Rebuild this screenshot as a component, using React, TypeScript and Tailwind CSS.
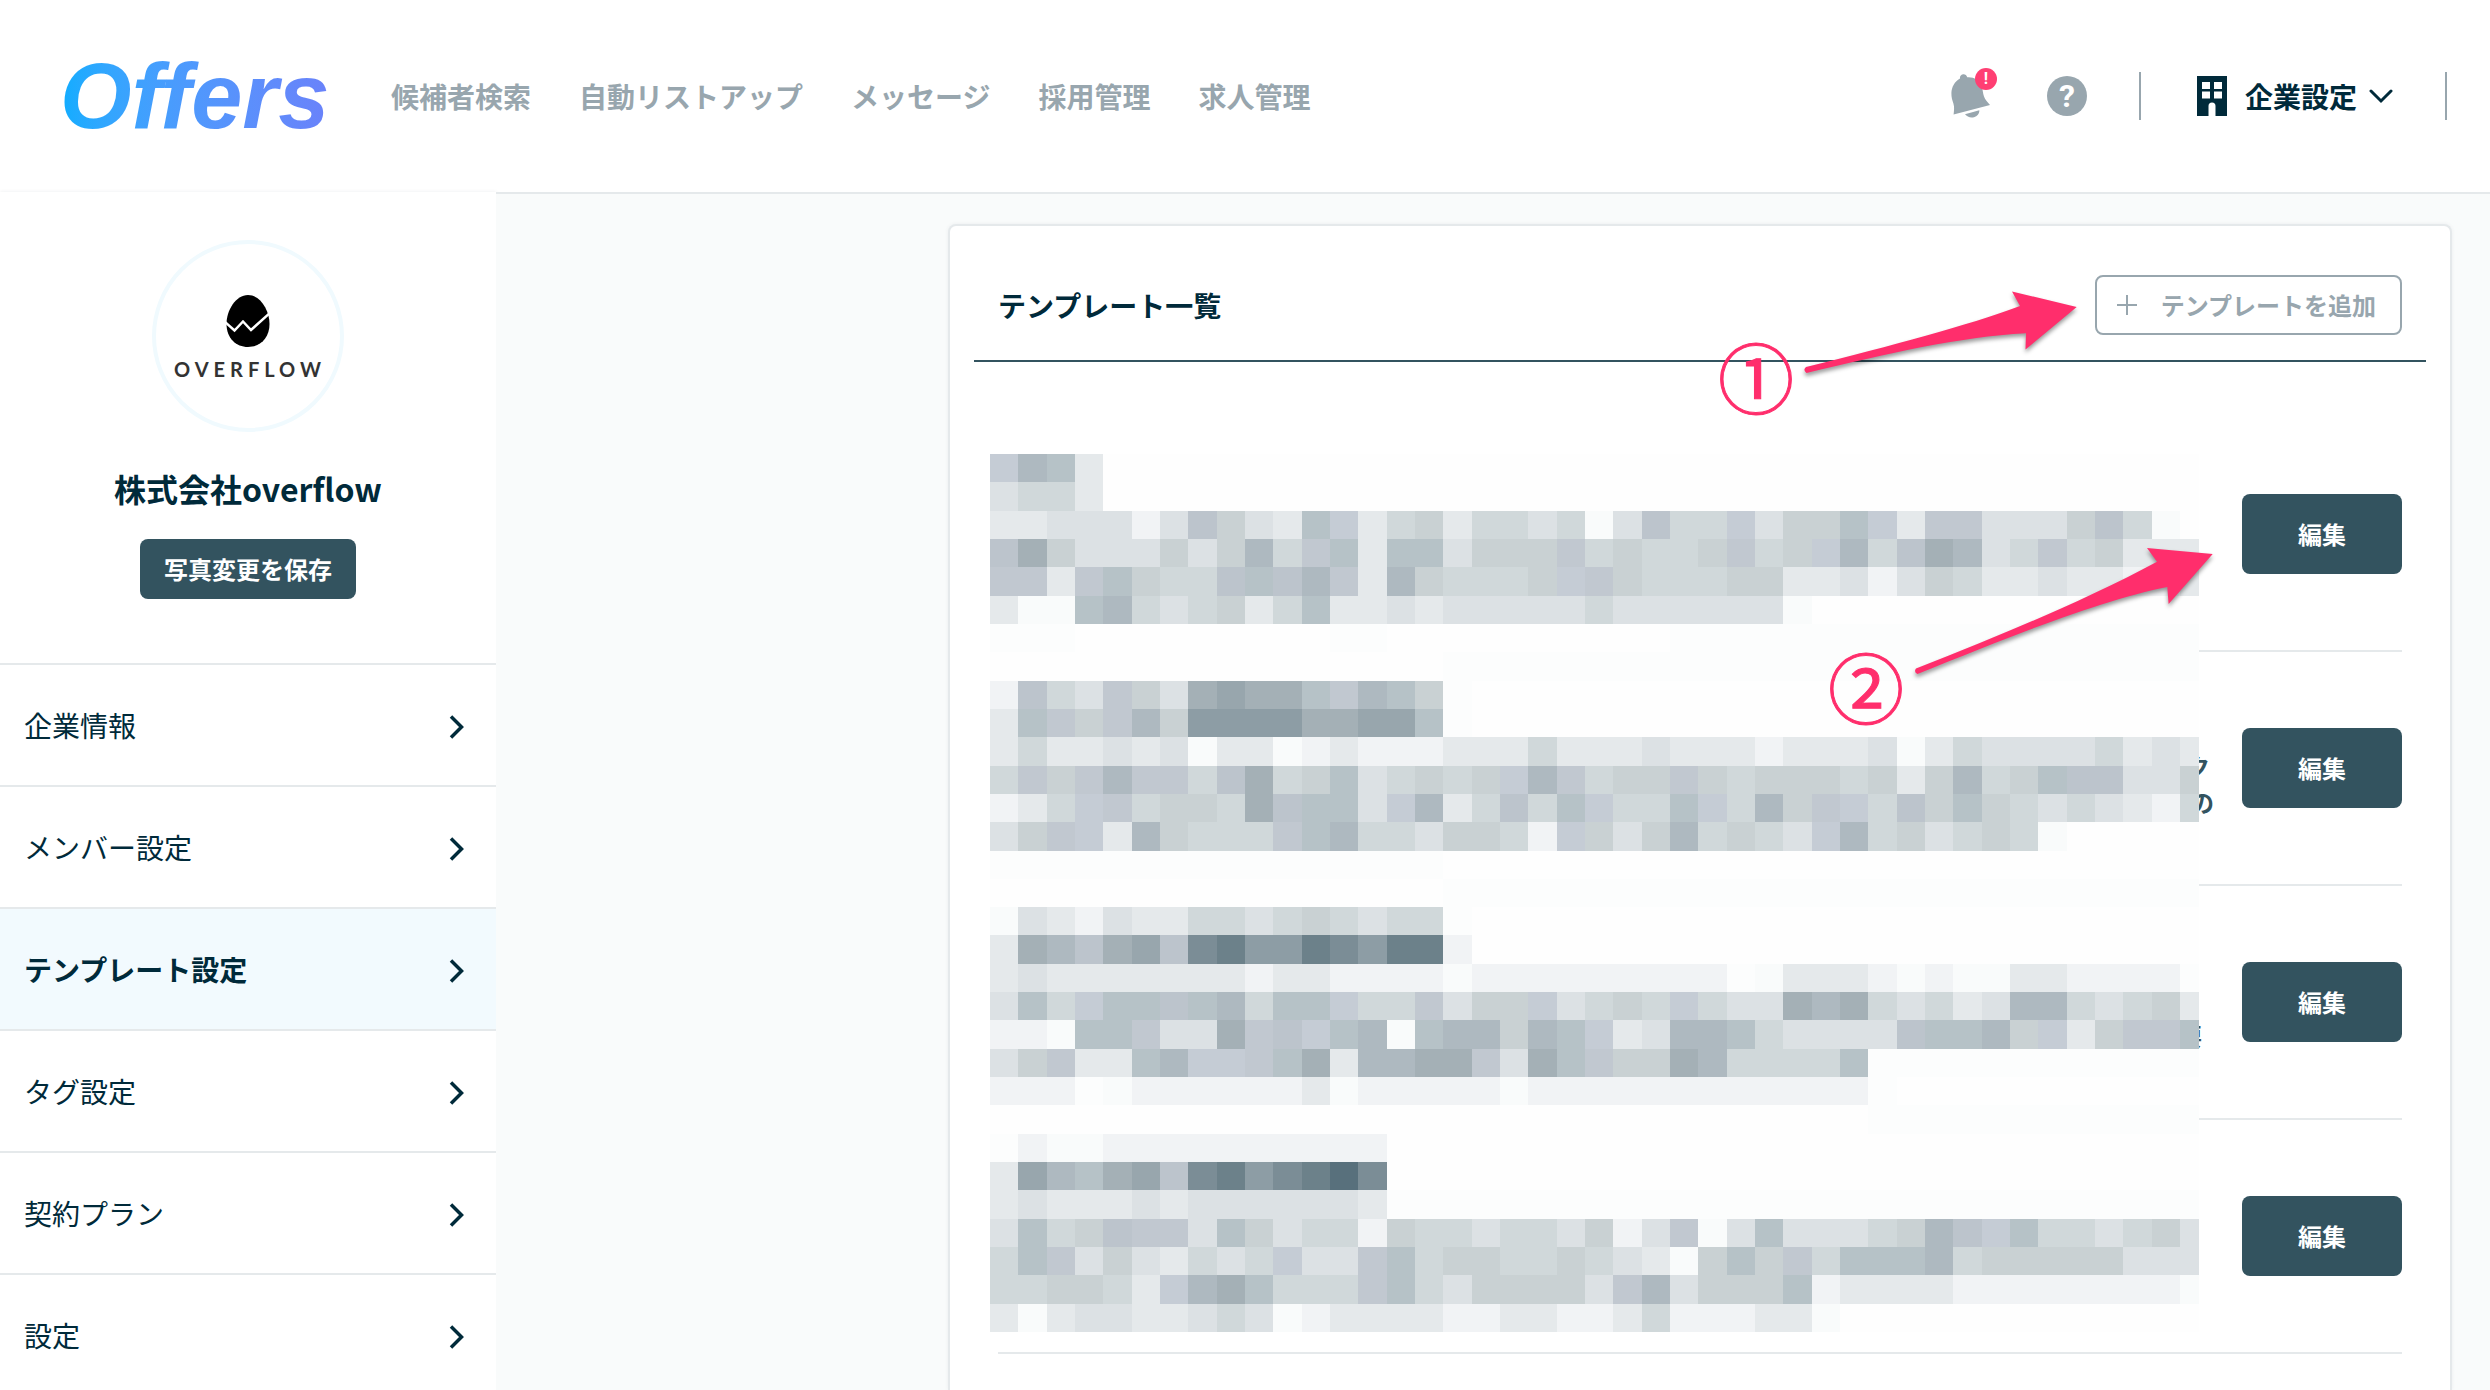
import React from "react";

const NAV_ITEMS = ["候補者検索", "自動リストアップ", "メッセージ", "採用管理", "求人管理"];

const MENU_ITEMS = [
  { label: "企業情報", active: false },
  { label: "メンバー設定", active: false },
  { label: "テンプレート設定", active: true },
  { label: "タグ設定", active: false },
  { label: "契約プラン", active: false },
  { label: "設定", active: false },
];

const TEMPLATES = [
  { id: 1, first: "", second: "" },
  { id: 2, first: "ク", second: "の" },
  { id: 3, first: "", second: "要" },
  { id: 4, first: "", second: "" },
];

/* Tones of the redaction mosaic, from lightest to darkest. */
const TONES: Record<string, string> = {
  z: "#fcfdfd",
  a: "#f9fbfb",
  b: "#f1f3f5",
  c: "#e5e9eb",
  d: "#dce1e4",
  e: "#d0d8da",
  f: "#c9d1d3",
  F: "#c5ccd5",
  g: "#c1c8d0",
  G: "#bcc4cc",
  h: "#b6c2c7",
  i: "#aeb9c0",
  j: "#a4b0b6",
  k: "#98a6ad",
  l: "#8d9da5",
  m: "#7b8d96",
  n: "#6c818a",
  o: "#58707c",
};

const MOSAIC = [
  "Fihc",
  "deec",
  "ccdddbdGfdchFcefceedeadGeeFdffhFcggdddfGea.",
  "GjfdddfdfieghchhdfffgefeefgefFieGjidegefccc",
  "ggcghfeeGhGigcifeeefFgfeeeffccdbdfeccdccbbc",
  "caahiedefcehccdcdddddedddddda",
  "zzz.........zz..........zzzzzzzzzzzzzzzzzzz",
  "................zzzzzzzzzzzzzzzzzzzzzzzzzzz",
  "bGedgfdjkjjhgihfz",
  "chgfgiflllljjkkhz",
  "ceccdcdaccabcbbbcccecccdcccbcccdacedddde" + "cdc",
  "egfgiggeGjefhdefefFigeffgfefffefcfiefhGGddf",
  "bceFgeffejGhhdFiceGehFeehFeifgFeGfhfededcbe",
  "dfgFcifeeeghieedffebFfdfiefedFiefdefea",
  "zzzzzzzzzzzzzzzz",
  "................zzzzzzzzzzzzzzzzzzzzzzzzzzz",
  "adcbdcceedefedeez",
  "cjiGjkGmnllnmlnnb",
  "cdcccccccbccbbbbabbbbbbbbbzacccbabaaccbbbbz",
  "dheFhhGhiehhFeegdffFdefeFeddjijedecdiiedefc",
  "bbahhgddjgGFhiahiifihFcdiiheddddGhhifFcfggh",
  "dfgcchiFFghjciijjgdjhgffjieeeehzzzzzzzzzzzz",
  "bbbzabbbbbbcabbbbbabbbbbbbbbbbbz",
  "...............................zzzzzzzzzzzz",
  "zbaabbbbbbbbbb",
  "ckihjkGmnlmnom",
  "cdcccdcdddddd" + "czzzzzzzzzzzzzzzzzzzzzzzzzzzzz",
  "dhefGggdhfdeebfeedeedfbdgadhdddefiGFheedefd",
  "ehgdfdcedeFddgheffeefedcafhfgehhhiefffffddd",
  "eeffecFijheeegh" + "edffffdgidfffhbccccbbbbbbbba",
  "cacddccdedabccccbbccbbcebbbcca",
];

function Mosaic() {
  return (
    <svg
      className="pointer-events-none absolute -left-2 top-9 h-[878px] w-[1209px]"
      viewBox="0 0 4267 3100"
      preserveAspectRatio="none"
      shapeRendering="crispEdges"
      aria-hidden="true"
    >
      <rect width="4267" height="3100" fill="#fefefe" />
      {MOSAIC.map((row, y) =>
        row.split("").map((tone, x) =>
          tone === "." ? null : (
            <rect key={`${x}-${y}`} x={x * 100} y={y * 100} width="100" height="100" fill={TONES[tone]} />
          )
        )
      )}
    </svg>
  );
}

function BellIcon() {
  return (
    <svg className="h-11 w-10" viewBox="0 0 40 44" fill="#98a6ae" aria-hidden="true">
      <path d="M9 4.5C8.6 2.3 10 .6 12 .3c2-.3 3.600.8 4.200 2.900 6.300-.6 12 2.600 14.500 9.300 1.200 3.500 1.100 6.500 2.300 10 1.100 3.200 3.300 5.400 6 8.500L2.600 40.500C3 36.500 3.600 33.500 2.400 29.500 1.300 26 .3 23.500.4 19 .6 13 3.600 7.600 9 4.500Z" />
      <path d="M14 40.300 28.300 36.300C28.700 39.500 26.500 42.300 23 43.200c-3.600.9-7-.3-9-2.900Z" />
    </svg>
  );
}

function BuildingIcon() {
  return (
    <svg className="h-10 w-[30px]" viewBox="0 0 30 40" aria-hidden="true">
      <path
        fill="#002a3a"
        fillRule="evenodd"
        d="M0 0H30V40H18.500V30a3.500 3.500 0 0 0-7 0V40H0ZM5 6V13H13V6ZM17 6V13H25V6ZM5 15.500V22.500H13V15.500ZM17 15.500V22.500H25V15.500Z"
      />
    </svg>
  );
}

function Header() {
  return (
    <header className="flex h-48 shrink-0 items-center bg-white pl-15 pr-[43px]">
      <a
        href="#"
        className="w-[331px] bg-linear-to-r from-[#0cadff] from-0% to-[#6b80fa] to-85% bg-clip-text font-['Liberation_Sans'] text-[92px] leading-[96px] font-bold text-transparent italic"
      >
        Offers
      </a>
      <nav className="flex gap-12 text-[28px] leading-10 font-bold text-[#98a6ae]">
        {NAV_ITEMS.map((item) => (
          <a key={item} href="#" className="whitespace-nowrap">
            {item}
          </a>
        ))}
      </nav>
      <div className="ml-auto flex items-center">
        <button type="button" aria-label="お知らせ" className="relative">
          <BellIcon />
          <span className="absolute -top-1.5 left-6 flex size-[22px] items-center justify-center rounded-full bg-[#ff3f73] font-[Roboto] text-base leading-none font-bold text-white">
            !
          </span>
        </button>
        <button
          type="button"
          aria-label="ヘルプ"
          className="ml-14 flex size-10 items-center justify-center rounded-full bg-[#98a6ae] font-[Roboto] text-[32px] leading-none font-bold text-white"
        >
          ?
        </button>
        <div className="ml-13 h-12 w-0.5 bg-[#98a6ae]" />
        <button type="button" className="ml-14 flex items-center text-[28px] leading-10 font-bold whitespace-nowrap">
          <BuildingIcon />
          <span className="ml-[18px]">企業設定</span>
          <svg className="ml-3 h-4 w-6" viewBox="0 0 24 16" fill="none" stroke="#002a3a" strokeWidth="3" aria-hidden="true">
            <path d="M2 3 12 13 22 3" strokeLinecap="round" />
          </svg>
        </button>
        <div className="ml-13 h-12 w-0.5 bg-[#98a6ae]" />
      </div>
    </header>
  );
}

function CompanyLogo() {
  return (
    <div className="flex size-48 flex-col items-center rounded-full border-4 border-[#f0fafe] bg-white pt-[51px]">
      <svg className="h-[52px] w-11" viewBox="0 0 44 52" aria-hidden="true">
        <path d="M22 0C34 0 43.500 15 43.500 29 43.500 43 34 52 22 52S.5 43 .5 29C.5 15 10 0 22 0Z" fill="#000" />
        <path d="M-1 27 8.500 35.500 17 26.500 25 35 45 17" fill="none" stroke="#fff" strokeWidth="2.500" />
      </svg>
      <span className="mt-2 pl-1 font-[Lato] text-xl leading-7 font-bold tracking-[5px] text-[#333]">OVERFLOW</span>
    </div>
  );
}

function Sidebar() {
  return (
    <aside className="flex w-[496px] shrink-0 flex-col bg-white shadow-[0_0_4px_rgba(0,42,58,0.08)]">
      <div className="flex flex-col items-center pt-12 pb-16">
        <CompanyLogo />
        <h1 className="mt-9 text-[32px] leading-10 font-bold">株式会社overflow</h1>
        <button
          type="button"
          className="mt-[31px] h-15 rounded-lg bg-[#33535f] px-6 text-2xl font-bold text-white"
        >
          写真変更を保存
        </button>
      </div>
      <nav>
        {MENU_ITEMS.map((item) => (
          <a
            key={item.label}
            href="#"
            className={
              item.active
                ? "flex h-[122px] items-center justify-between border-t-2 border-[#e5e9eb] bg-[#f2fafe] pr-8 pl-6 text-[28px] font-bold"
                : "flex h-[122px] items-center justify-between border-t-2 border-[#e5e9eb] pr-8 pl-6 text-[28px]"
            }
          >
            {item.label}
            <svg className="mt-1 h-6 w-4" viewBox="0 0 16 24" fill="none" stroke="#002a3a" strokeWidth="3.500" aria-hidden="true">
              <path d="M3 1.500 13.500 12 3 22.500" />
            </svg>
          </a>
        ))}
      </nav>
    </aside>
  );
}

function Annotations() {
  return (
    <div className="pointer-events-none text-[#ff2e6c]">
      <span className="absolute top-[111px] right-[656px] text-[76px] leading-19 [-webkit-text-stroke:1px]">①</span>
      <span className="absolute top-[421px] right-[546px] text-[76px] leading-19 [-webkit-text-stroke:1px]">②</span>
      <svg
        className="absolute top-[54px] right-[364px] h-[100px] w-[290px] drop-shadow-[0_3px_2px_rgba(0,0,0,0.4)]"
        viewBox="1796 280 290 100"
        fill="currentColor"
        aria-hidden="true"
      >
        <path d="M2076.700 307 2012 291.400 2020 306C1966 326 1894 345 1806 367Q1802.500 370 1806.500 373C1890 353 1958 337 2026 333.200L2025.500 349.600Z" />
      </svg>
      <svg
        className="absolute top-[310px] right-[230px] h-[150px] w-[310px] drop-shadow-[0_3px_2px_rgba(0,0,0,0.4)]"
        viewBox="1910 536 310 150"
        fill="currentColor"
        aria-hidden="true"
      >
        <path d="M2212.700 554 2147 548 2157 561.700C2090 598 2002 635 1916 668.500Q1913.500 672 1917.500 674C2002 640 2100 600 2167.300 587L2168.600 604Z" />
      </svg>
    </div>
  );
}

function TemplateCard() {
  return (
    <section className="relative flex-1 rounded-t-lg border-2 border-b-0 border-[#e5e9eb] bg-white px-6 shadow-[0_0_4px_rgba(0,42,58,0.06)]">
      <div className="flex items-center justify-between border-b-2 border-[#33535f] px-6 pt-[49px] pb-[25px]">
        <h2 className="text-[28px] leading-10 font-bold">テンプレート一覧</h2>
        <button
          type="button"
          className="flex h-15 items-center gap-6 rounded-lg border-2 border-[#98a6ae] bg-white pr-6 pl-5 text-2xl font-bold text-[#98a6ae]"
        >
          <svg className="size-5" viewBox="0 0 20 20" stroke="currentColor" strokeWidth="2" aria-hidden="true">
            <path d="M10 0V20M0 10H20" />
          </svg>
          テンプレートを追加
        </button>
      </div>
      <div className="relative mx-6 mt-14">
        <ul>
          {TEMPLATES.map((template) => (
            <li key={template.id} className="flex h-[234px] items-center border-b-2 border-[#e5e9eb]">
              <div className="flex-1 pt-8 text-right text-2xl leading-9 font-bold text-[#33535f]">
                <p className="h-9 pr-1">{template.first}</p>
                <p className={template.first ? "h-9" : "h-9 pr-3"}>{template.second}</p>
              </div>
              <button type="button" className="ml-7 h-20 w-40 rounded-lg bg-[#33535f] text-2xl font-bold text-white">
                編集
              </button>
            </li>
          ))}
        </ul>
        <Mosaic />
      </div>
      <Annotations />
    </section>
  );
}

export default function App() {
  return (
    <div className="flex h-screen flex-col overflow-hidden bg-white font-['Noto_Sans_CJK_JP',sans-serif] text-[#002a3a]">
      <Header />
      <div className="flex min-h-0 flex-1">
        <Sidebar />
        <main className="flex min-w-0 flex-1 flex-col border-t-2 border-[#e5e9eb] bg-[#f9fbfb] pt-[30px] pr-[38px] pl-[452px]">
          <TemplateCard />
        </main>
      </div>
    </div>
  );
}
